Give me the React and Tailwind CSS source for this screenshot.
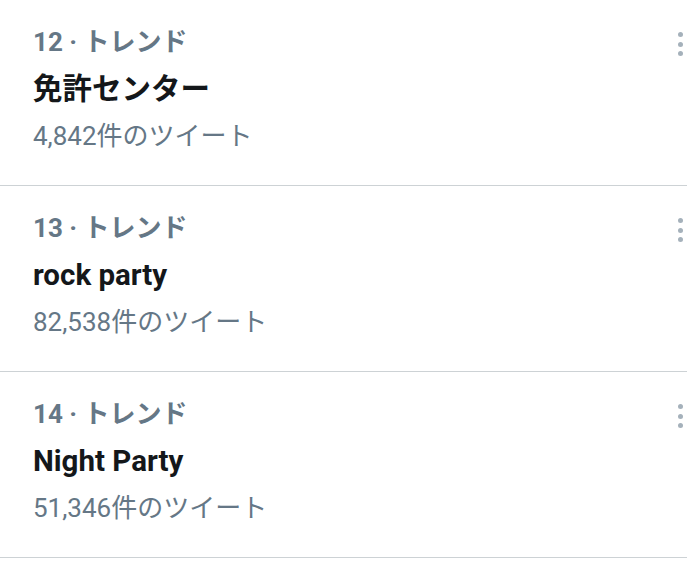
const trends = [
  { rank: 12, title: '免許センター', count: '4,842件のツイート' },
  { rank: 13, title: 'rock party', count: '82,538件のツイート' },
  { rank: 14, title: 'Night Party', count: '51,346件のツイート' },
]

function Dots() {
  return (
    <div className="flex flex-col items-center gap-[4.5px] pt-[32px]">
      <span className="block w-[5px] h-[5px] rounded-full bg-[#a5b1bb]" />
      <span className="block w-[5px] h-[5px] rounded-full bg-[#a5b1bb]" />
      <span className="block w-[5px] h-[5px] rounded-full bg-[#a5b1bb]" />
    </div>
  )
}

export default function App() {
  return (
    <div
      className="w-[687px] h-[563px] bg-white overflow-hidden"
      style={{ fontFamily: 'Roboto, "Noto Sans CJK JP", sans-serif' }}
    >
      {trends.map((t) => (
        <div key={t.rank} className="flex justify-between border-b border-[#cdd2d5] pl-[33px] pr-[4px]">
          <div className="pt-[19px] pb-[25px]">
            <div className="h-[47px] leading-[47px] text-[26px] text-[#657786] font-bold">
              {t.rank} · トレンド
            </div>
            <div className="h-[47px] leading-[47px] text-[29.5px] font-bold text-[#14171a]">{t.title}</div>
            <div className="h-[47px] leading-[47px] text-[26px] text-[#657786]">{t.count}</div>
          </div>
          <Dots />
        </div>
      ))}
    </div>
  )
}
